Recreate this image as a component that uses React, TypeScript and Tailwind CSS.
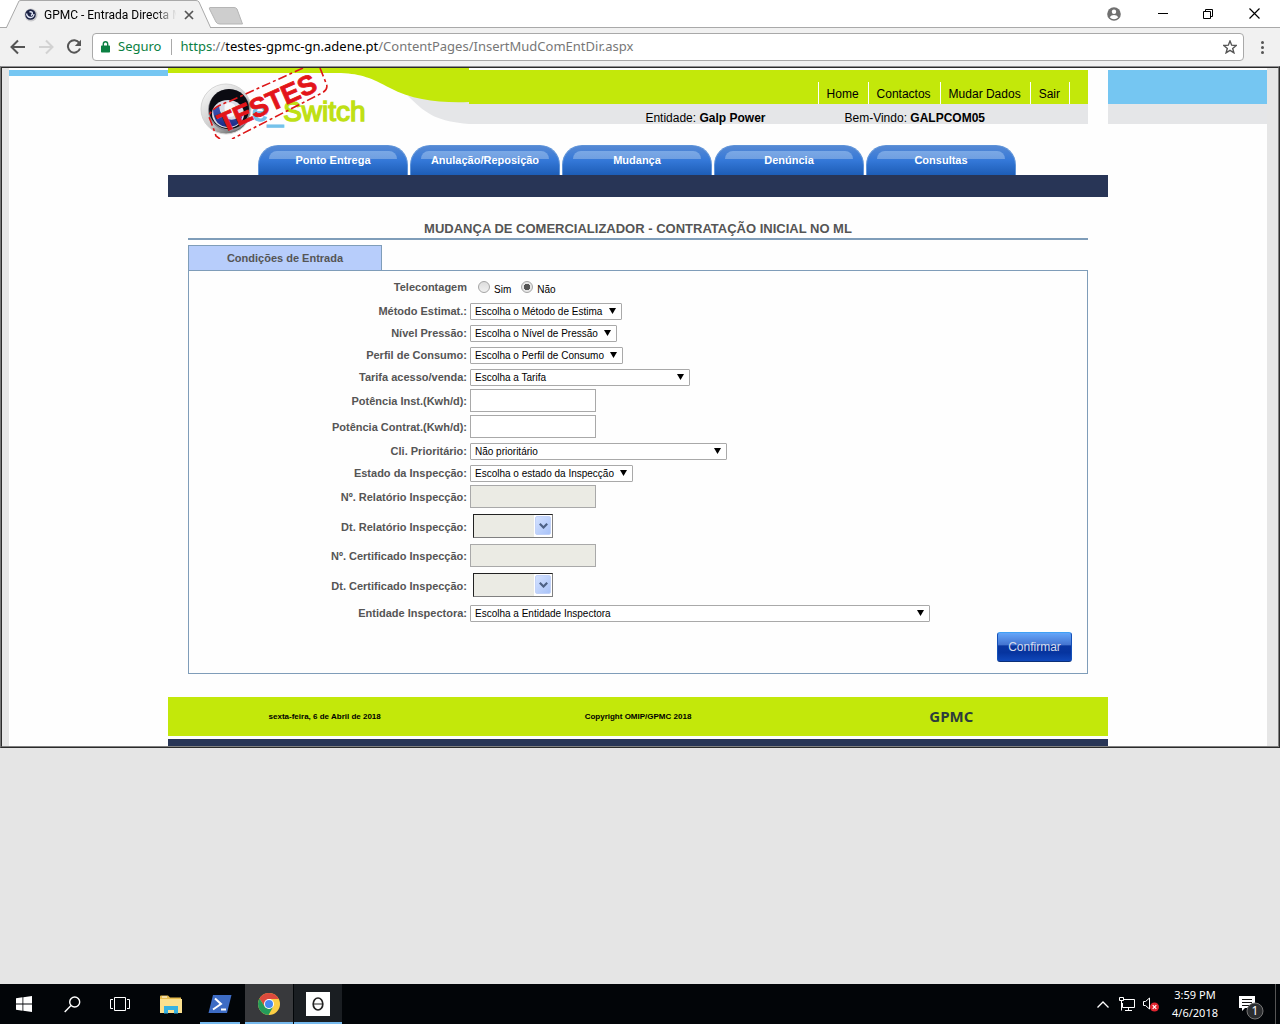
import React from "react";

const mainNav = ["Ponto Entrega", "Anulação/Reposição", "Mudança", "Denúncia", "Consultas"];
const topLinks = ["Home", "Contactos", "Mudar Dados", "Sair"];

function SwirlIcon() {
  return (
    <svg width="14" height="14" viewBox="0 0 14 14" aria-hidden="true">
      <circle cx="7" cy="7" r="6.5" fill="#c9c9cc" />
      <circle cx="6.500" cy="6.500" r="5.300" fill="#1d2445" />
      <path d="M2.500 5.500c1 5 7 5.500 7.500.5" stroke="#dfe5f5" strokeWidth="1.300" fill="none" />
      <path d="M5.500 4c3-1 4 2 1.500 3.500" stroke="#dfe5f5" strokeWidth="1.500" fill="none" />
    </svg>
  );
}

function BrowserChrome() {
  return (
    <header className="font-['Noto_Sans',sans-serif]">
      <div className="flex h-7 bg-white">
        <div className="relative h-7 w-[245px] shrink-0 border-b border-[#a9a9a9]">
          <svg className="absolute inset-0" width="245" height="28" viewBox="0 0 245 28" aria-hidden="true">
            <path d="M6 28.500L19 1Q19.500.5 21 .5H196Q198 .5 199 2L211 28.500Z" fill="#f1f1f1" stroke="#a9a9a9" />
            <path d="M210 7.500H234Q236 7.500 237 9L242.500 24H220Q217 24 216 22L209.500 9Q209 7.500 210 7.500Z" fill="#cecece" stroke="#b5b5b5" />
          </svg>
          <div className="relative flex h-7 items-center pt-0.5 pl-6">
            <SwirlIcon />
            <span className="ml-1.5 w-[138px] bg-linear-to-r from-black from-80% to-transparent to-96% bg-clip-text font-['Roboto',sans-serif] text-xs whitespace-nowrap text-transparent">
              GPMC - Entrada Directa M
            </span>
            <button type="button" aria-label="Fechar separador" className="ml-0.5">
              <svg width="10" height="10" viewBox="0 0 10 10" stroke="#555" strokeWidth="1.700">
                <path d="M1 1l8 8M9 1L1 9" />
              </svg>
            </button>
          </div>
        </div>
        <div className="flex flex-1 items-center justify-end border-b border-[#a9a9a9] pr-5">
          <button type="button" aria-label="Perfil">
            <svg width="14" height="14" viewBox="0 0 14 14">
              <circle cx="7" cy="7" r="6.800" fill="#707070" />
              <circle cx="7" cy="4.800" r="2.200" fill="#fff" />
              <path d="M2.700 10.300Q4 8 7 8t4.300 2.300Q9.500 12.300 7 12.300T2.700 10.300Z" fill="#fff" />
            </svg>
          </button>
          <button type="button" aria-label="Minimizar" className="ml-[37px]">
            <svg width="10" height="10" viewBox="0 0 10 10" stroke="#000"><path d="M0 4.500h10" /></svg>
          </button>
          <button type="button" aria-label="Restaurar" className="ml-[35px]">
            <svg width="10" height="10" viewBox="0 0 10 10" fill="none" stroke="#000"><path d="M.5 2.500h7v7h-7zM2.500 2.500V.5h7v7h-2" /></svg>
          </button>
          <button type="button" aria-label="Fechar" className="ml-9">
            <svg width="11" height="11" viewBox="0 0 11 11" stroke="#000" strokeWidth="1.200"><path d="M.5.5l10 10M10.500.5l-10 10" /></svg>
          </button>
        </div>
      </div>
      <div className="flex h-[38px] items-center bg-[#f1f1f1] pl-2.5">
        <button type="button" aria-label="Anterior">
          <svg width="16" height="16" viewBox="0 0 16 16" fill="none" stroke="#555" strokeWidth="2"><path d="M15 8H2.500M8 1.500L1.500 8 8 14.500" /></svg>
        </button>
        <button type="button" aria-label="Seguinte" className="ml-3">
          <svg width="16" height="16" viewBox="0 0 16 16" fill="none" stroke="#d2d2d2" strokeWidth="2"><path d="M1 8h12.500M8 1.500L14.500 8 8 14.500" /></svg>
        </button>
        <button type="button" aria-label="Recarregar" className="ml-3">
          <svg width="16" height="16" viewBox="0 0 16 16">
            <path d="M13.300 4A6.200 6.200 0 1 0 14 9.500" fill="none" stroke="#555" strokeWidth="2" />
            <path d="M15 .8V7H8.800Z" fill="#555" />
          </svg>
        </button>
        <div className="ml-2.5 flex h-7 flex-1 items-center rounded-sm border border-[#a9a9a9] bg-white text-[13px]">
          <svg className="ml-2" width="9" height="12" viewBox="0 0 9 12" aria-hidden="true">
            <path d="M2.300 5V3a2.200 2.200 0 0 1 4.400 0v2" fill="none" stroke="#0b8043" strokeWidth="1.400" />
            <rect y="4.500" width="9" height="7" rx=".7" fill="#0b8043" />
          </svg>
          <span className="ml-2 text-[#0b8043]">Seguro</span>
          <span className="mr-2 ml-2.5 h-4 w-px bg-[#a9a9a9]" />
          <span className="flex-1 whitespace-nowrap text-[#777]">
            <span className="text-[#0b8043]">https</span>://<span className="text-black">testes-gpmc-gn.adene.pt</span>/ContentPages/InsertMudComEntDir.aspx
          </span>
          <button type="button" aria-label="Marcar página" className="mr-1.5">
            <svg width="14" height="14" viewBox="0 0 14 14" fill="none" stroke="#555" strokeWidth="1.400">
              <path d="M7 1l1.700 4.200 4.500.3-3.500 2.900 1.200 4.400L7 10.400l-3.900 2.400 1.200-4.400L.8 5.500l4.500-.3Z" />
            </svg>
          </button>
        </div>
        <button type="button" aria-label="Menu" className="mr-4 ml-[17px]">
          <svg width="3" height="13" viewBox="0 0 3 13" fill="#555"><circle cx="1.500" cy="1.500" r="1.500" /><circle cx="1.500" cy="6.500" r="1.500" /><circle cx="1.500" cy="11.500" r="1.500" /></svg>
        </button>
      </div>
    </header>
  );
}

function Logo() {
  return (
    <svg width="301" height="71" viewBox="0 0 301 71" className="block shrink-0" role="img" aria-label="e_Switch">
      <defs>
        <linearGradient id="ring" x1="0" y1="0" x2=".8" y2="1">
          <stop offset="0" stopColor="#fff" />
          <stop offset=".6" stopColor="#ccc" />
          <stop offset="1" stopColor="#555" />
        </linearGradient>
        <linearGradient id="lens" x1="0" y1="0" x2="0" y2="1">
          <stop offset="0" stopColor="#4158b8" />
          <stop offset="1" stopColor="#1a2b86" />
        </linearGradient>
      </defs>
      <path d="M240 28C260 48 270 53 301 56V30Z" fill="#e5e6e8" />
      <path d="M0 0H301V34C270 35 245 32 222 20C203 10 194 6 173 5H0Z" fill="#c3e80a" />
      <circle cx="58" cy="41" r="25" fill="url(#ring)" stroke="#d5d5d5" />
      <circle cx="61" cy="42" r="21" fill="#8a8a92" />
      <circle cx="61" cy="41" r="20" fill="#0b0b12" />
      <ellipse cx="60" cy="46" rx="16" ry="14" fill="#d9dbe6" />
      <path d="M45 42Q46 59 61 59Q74 58 75 44Q68 54 60 51Q52 48 51 38Z" fill="url(#lens)" />
      <path d="M57 35Q67 33 68 41T61 49Q55 45 57 35Z" fill="#f7f7fa" />
      <text x="84" y="53" fontFamily="Liberation Sans, Arial, sans-serif" fontSize="28" strokeWidth="1.400">
        <tspan fill="#74c2ea" stroke="#74c2ea">e_</tspan>
        <tspan fill="#bfe015" stroke="#bfe015">Switch</tspan>
      </text>
      <path d="M135 0L60 34Q42 40 41 49Q44 56 48 68L52 71M152 0L158 15Q161 21 154 25L64 71" fill="none" stroke="#dd1718" strokeWidth="1.600" strokeDasharray="9 3 3 3" />
      <text x="55" y="65" transform="rotate(-24 55 65)" fontFamily="Liberation Sans, Arial, sans-serif" fontWeight="bold" fontSize="27" fill="#e3151a" stroke="#e3151a" strokeWidth=".8">TESTES</text>
    </svg>
  );
}

function SiteHeader() {
  return (
    <div>
      <div className="flex h-[77px] pr-5">
        <Logo />
        <div className="flex-1 pt-0.5 text-xs text-black">
          <nav className="flex h-[34px] items-end justify-end bg-[#c3e80a] pr-[18px]">
            {topLinks.map((l) => (
              <a key={l} href="#" className="flex h-[22px] items-center border-l border-white pt-0.5 pr-[9px] pl-2 last:border-r">
                {l}
              </a>
            ))}
          </nav>
          <div className="flex h-5 justify-end bg-[#e5e6e8] pt-1.5 pr-[103px] leading-4">
            <span>Entidade: <b>Galp Power</b></span>
            <span className="ml-[79px]">Bem-Vindo: <b>GALPCOM05</b></span>
          </div>
        </div>
      </div>
      <nav className="flex h-[30px] gap-0.5 pl-[90px]">
        {mainNav.map((n) => (
          <a
            key={n}
            href="#"
            className="relative w-[150px] rounded-t-[20px] border-x border-t border-[#5e93d8] bg-linear-to-b from-[#5589d4] via-[#3478d8] to-[#1d5db6] text-center text-[11px] leading-7 font-bold text-white"
          >
            <span className="absolute inset-x-2.5 top-[5px] h-2 rounded-t-full bg-linear-to-b from-[#7aa8e6] to-[#6f9fe1]" />
            <span className="relative">{n}</span>
          </a>
        ))}
      </nav>
      <div className="h-[22px] bg-[#283556]" />
    </div>
  );
}

function Row({ label, id, tall, children }: { label: string; id: string; tall?: string; children: React.ReactNode }) {
  return (
    <div className={"flex items-center gap-[3px] " + (tall ?? "h-[22px]")}>
      <label htmlFor={id} className="w-[278px] text-right text-[11px] leading-4 font-bold text-[#555]">{label}</label>
      {children}
    </div>
  );
}

function Select({ id, value, width }: { id: string; value: string; width: string }) {
  return (
    <span className={"relative block " + width}>
      <select id={id} className="block h-[17px] w-full appearance-none rounded-[1px] border border-[#a9a9a9] bg-white pr-4 pl-1 text-[10px] leading-[15px] text-black">
        <option>{value}</option>
      </select>
      <svg className="pointer-events-none absolute top-[5px] right-1.5" width="7" height="6" viewBox="0 0 7 6" aria-hidden="true"><path d="M0 0h7L3.500 6Z" /></svg>
    </span>
  );
}

function TextBox({ id, disabled }: { id: string; disabled?: boolean }) {
  return <input id={id} type="text" disabled={disabled} className="mb-px h-[23px] w-[126px] border border-[#a9a9a9] bg-white px-1 text-[10px] disabled:bg-[#ebebe4]" />;
}

function DateBox({ id }: { id: string }) {
  return (
    <span className="mb-px ml-[3px] flex h-6 w-20 border border-t-[#222] border-r-[#808080] border-b-[#808080] border-l-[#222] bg-white">
      <input id={id} type="text" disabled className="min-w-0 flex-1 bg-[#ebebe4] px-1 text-[10px]" />
      <button type="button" aria-label="Escolher data" className="m-px flex h-[19px] w-4 items-center justify-center rounded-xs border border-[#c2d2f8] bg-linear-to-br from-[#d3e1ff] to-[#a9c3f8]">
        <svg width="9" height="6" viewBox="0 0 9 6" fill="none" stroke="#4d6185" strokeWidth="2.200"><path d="M.8.8L4.500 4.500 8.200.8" /></svg>
      </button>
    </span>
  );
}

function Radio({ id, label, checked }: { id: string; label: string; checked?: boolean }) {
  return (
    <span className="flex items-center">
      <input
        id={id}
        type="radio"
        name="telecontagem"
        defaultChecked={checked}
        className="size-3 appearance-none rounded-full border border-[#a5a5a5] bg-linear-to-b from-[#ddd] to-[#f0f0f0] checked:bg-[radial-gradient(circle,#555_0_3px,#e6e6e6_3px)]"
      />
      <label htmlFor={id} className="ml-1 pt-1.5 text-[10px] leading-3 text-black">{label}</label>
    </span>
  );
}

function EntryForm() {
  return (
    <main className="px-5 pt-6">
      <h1 className="h-[19px] border-b-2 border-[#7f9db9] text-center text-[13px] leading-4 font-bold text-[#555]">
        MUDANÇA DE COMERCIALIZADOR - CONTRATAÇÃO INICIAL NO ML
      </h1>
      <div className="mt-[5px] h-[25px] w-[194px] border border-b-0 border-[#7f9db9] bg-[#b7cdfb] text-center text-[11px] leading-6 font-bold text-[#555]">
        Condições de Entrada
      </div>
      <form className="border border-[#7f9db9] pt-[5px] pb-[11px]" onSubmit={(e) => e.preventDefault()}>
        <div role="radiogroup" aria-labelledby="tele" className="flex h-6 items-start">
          <span id="tele" className="w-[278px] pt-[3px] text-right text-[11px] leading-4 font-bold text-[#555]">Telecontagem</span>
          <span className="ml-[11px] flex gap-2.5 pt-0.5">
            <Radio id="tele-sim" label="Sim" />
            <Radio id="tele-nao" label="Não" checked />
          </span>
        </div>
        <Row label="Método Estimat.:" id="metodo"><Select id="metodo" value="Escolha o Método de Estima" width="w-[152px]" /></Row>
        <Row label="Nível Pressão:" id="nivel"><Select id="nivel" value="Escolha o Nível de Pressão" width="w-[147px]" /></Row>
        <Row label="Perfil de Consumo:" id="perfil"><Select id="perfil" value="Escolha o Perfil de Consumo" width="w-[153px]" /></Row>
        <Row label="Tarifa acesso/venda:" id="tarifa"><Select id="tarifa" value="Escolha a Tarifa" width="w-[220px]" /></Row>
        <Row label="Potência Inst.(Kwh/d):" id="pot-inst" tall="h-[26px]"><TextBox id="pot-inst" /></Row>
        <Row label="Potência Contrat.(Kwh/d):" id="pot-contrat" tall="h-[26px]"><TextBox id="pot-contrat" /></Row>
        <Row label="Cli. Prioritário:" id="prioritario"><Select id="prioritario" value="Não prioritário" width="w-[257px]" /></Row>
        <Row label="Estado da Inspecção:" id="estado"><Select id="estado" value="Escolha o estado da Inspecção" width="w-[163px]" /></Row>
        <Row label="Nº. Relatório Inspecção:" id="relatorio" tall="h-[26px]"><TextBox id="relatorio" disabled /></Row>
        <Row label="Dt. Relatório Inspecção:" id="dt-relatorio" tall="h-[33px]"><DateBox id="dt-relatorio" /></Row>
        <Row label="Nº. Certificado Inspecção:" id="certificado" tall="h-[26px]"><TextBox id="certificado" disabled /></Row>
        <Row label="Dt. Certificado Inspecção:" id="dt-certificado" tall="h-[33px]"><DateBox id="dt-certificado" /></Row>
        <Row label="Entidade Inspectora:" id="entidade"><Select id="entidade" value="Escolha a Entidade Inspectora" width="w-[460px]" /></Row>
        <div className="mt-2 flex justify-end pr-[15px]">
          <button
            type="submit"
            className="h-[30px] w-[75px] rounded-[3px] border border-x-[#1450b8] border-t-[#3fa0f5] border-b-[#0b2f78] bg-[linear-gradient(#64a6fa_0%,#4474d0_42%,#0a37a0_46%,#06349f_70%,#1048bb_100%)] text-xs text-[#d5dcec]"
          >
            Confirmar
          </button>
        </div>
      </form>
    </main>
  );
}

function SiteFrame() {
  return (
    <div className="border border-t-[#8f8f92] border-r-[#2b2b2b] border-b-[#2b2b2b] border-l-[#777]">
      <div className="border border-t-[#2b2b2b] border-r-[#808080] border-b-[#808080] border-l-[#2b2b2b] bg-[#e6e6e6] pr-[11px] pl-[7px]">
        <div className="flex bg-[#fefefe] font-['Liberation_Sans',Arial,sans-serif]">
          <div className="flex-1 pt-0.5"><div className="h-1.5 bg-[#75c6f2]" /></div>
          <div className="w-[940px]">
            <SiteHeader />
            <EntryForm />
            <footer className="mt-[23px]">
              <div className="grid h-[39px] grid-cols-3 items-center bg-[#c3e80a] text-center text-[8px] font-bold text-black">
                <span>sexta-feira, 6 de Abril de 2018</span>
                <span>Copyright OMIP/GPMC 2018</span>
                <span className="font-['Open_Sans',sans-serif] text-[15px] text-[#2c3c3c]">GPMC</span>
              </div>
              <div className="mt-[3px] h-[7px] bg-[#283556]" />
            </footer>
          </div>
          <div className="flex-1 pt-0.5">
            <div className="h-[34px] bg-[#75c6f2]" />
            <div className="h-5 bg-[#e5e6e8]" />
          </div>
        </div>
      </div>
    </div>
  );
}

function Taskbar() {
  const item = "flex h-10 w-12 items-center justify-center";
  return (
    <footer className="flex h-10 bg-[#020508] font-['Noto_Sans',sans-serif] text-white">
      <button type="button" aria-label="Iniciar" className={item}>
        <svg width="16" height="16" viewBox="0 0 16 16" fill="#fff"><path d="M0 2.200L6.500 1.300V7.600H0ZM7.300 1.200L16 0V7.600H7.300ZM0 8.400H6.500V14.700L0 13.800ZM7.300 8.400H16V16L7.300 14.800Z" /></svg>
      </button>
      <button type="button" aria-label="Procurar" className={item}>
        <svg width="17" height="17" viewBox="0 0 17 17" fill="none" stroke="#fff" strokeWidth="1.400"><circle cx="10.700" cy="6" r="5" /><path d="M7 9.500L.7 16" /></svg>
      </button>
      <button type="button" aria-label="Vista de tarefas" className={item}>
        <svg width="20" height="14" viewBox="0 0 20 14" fill="none" stroke="#fff"><path d="M4.500.5h11v13h-11zM3 2.500H.5v9H3M17 2.500h2.500v9H17" /></svg>
      </button>
      <button type="button" aria-label="Explorador de ficheiros" className="flex h-10 w-[54px] items-center justify-center">
        <svg width="22" height="19" viewBox="0 0 22 19">
          <path d="M0 1.500Q0 .5 1 .5H8L10 2.500H21V18H0Z" fill="#e8bd4e" />
          <path d="M0 4H22V18H0Z" fill="#fae08e" />
          <path d="M2 1.500h5v1H2z" fill="#fff" />
          <path d="M4 11H18V18.500H14V15H8V18.500H4Z" fill="#36b2e2" />
        </svg>
      </button>
      <button type="button" aria-label="PowerShell" className="ml-0.5 flex h-10 w-10 items-center justify-center shadow-[inset_0_-2px_#76b9ed]">
        <svg width="24" height="18" viewBox="0 0 24 18">
          <path d="M5 0H23.500L19 18H.5Z" fill="#3d6cc4" />
          <path d="M7 3.500L13 9 5 14.500M13 14.500H18" fill="none" stroke="#fff" strokeWidth="2" />
        </svg>
      </button>
      <button type="button" aria-label="Chrome" className="ml-[5px] flex h-10 w-12 items-center justify-center bg-[#38393c] shadow-[inset_0_-2px_#76b9ed]">
        <svg width="22" height="22" viewBox="0 0 22 22">
          <circle cx="11" cy="11" r="11" fill="#fcce44" />
          <path d="M11 0A11 11 0 0 0 1.500 5.500L6.700 13.500 11 6H20.800A11 11 0 0 0 11 0Z" fill="#dc4a3d" />
          <path d="M1.500 5.500A11 11 0 0 0 10.500 22L15.300 13.500 11 16 6.700 13.500Z" fill="#249b5a" />
          <circle cx="11" cy="11" r="5" fill="#fff" />
          <circle cx="11" cy="11" r="4" fill="#4688f1" />
        </svg>
      </button>
      <button type="button" aria-label="Aplicação" className="ml-px flex h-10 w-12 items-center justify-center bg-[#1a1e22] shadow-[inset_0_-2px_#76b9ed]">
        <svg width="24" height="24" viewBox="0 0 24 24" fill="none" stroke="#222">
          <path d="M0 0h24v24H0z" fill="#fff" stroke="none" />
          <ellipse cx="12" cy="12" rx="4.800" ry="6" strokeWidth="1.700" />
          <path d="M7 12h10" />
        </svg>
      </button>
      <div className="ml-auto flex items-center">
        <button type="button" aria-label="Ícones ocultos">
          <svg width="12" height="7" viewBox="0 0 12 7" fill="none" stroke="#fff" strokeWidth="1.300"><path d="M.5 6.500L6 1l5.500 5.500" /></svg>
        </button>
        <svg className="ml-2.5" width="16" height="14" viewBox="0 0 16 14" fill="none" stroke="#fff" role="img" aria-label="Rede">
          <path d="M5 2.500H15.500V10.500H3.500V6M9.500 10.500v3M6 13.500h7M.5.500h4v3h-4zM2.500 3.500v10" />
        </svg>
        <svg className="ml-2" width="16" height="16" viewBox="0 0 16 16" fill="none" stroke="#fff" role="img" aria-label="Som desligado">
          <path d="M.5 5.500H2.500L6.500 2V13L2.500 9.500H.5Z" />
          <circle cx="11.500" cy="11" r="4.500" fill="#e0242f" stroke="none" />
          <path d="M9.700 9.200l3.600 3.600M13.300 9.200l-3.600 3.600" strokeWidth="1.200" />
        </svg>
        <div className="ml-3 w-12 text-center text-[11px] leading-[18px] whitespace-nowrap">
          <div>3:59 PM</div>
          <div>4/6/2018</div>
        </div>
        <button type="button" aria-label="Notificações" className="mt-1.5 ml-[19px]">
          <svg width="26" height="26" viewBox="0 0 26 26">
            <path d="M1 2H17V14H7L4 17V14H1Z" fill="#fff" />
            <path d="M4 5.500h10M4 8.500h10M4 11.500h7" stroke="#111" />
            <circle cx="17" cy="17" r="8" fill="#2c2e30" stroke="#777" />
            <text x="17" y="21" textAnchor="middle" fontSize="12" fill="#fff" fontFamily="Noto Sans, sans-serif">1</text>
          </svg>
        </button>
        <span className="ml-[11px] h-10 w-px bg-[#555]" />
        <span className="w-1" />
      </div>
    </footer>
  );
}

export default function App() {
  return (
    <div className="flex min-h-screen flex-col bg-[#e5e5e5]">
      <BrowserChrome />
      <SiteFrame />
      <div className="flex-1" />
      <Taskbar />
    </div>
  );
}
